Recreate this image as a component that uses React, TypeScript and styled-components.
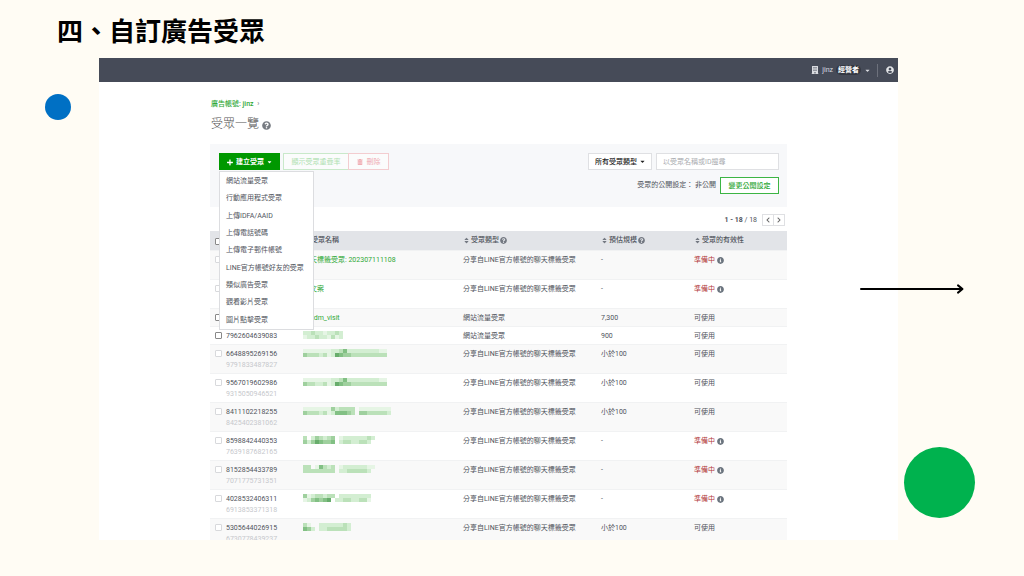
import React from "react";
import styled, { createGlobalStyle, css } from "styled-components";
import {
  FaPlus,
  FaQuestionCircle,
  FaInfoCircle,
  FaSort,
  FaTrashAlt,
  FaUserCircle,
  FaBuilding,
  FaChevronLeft,
  FaChevronRight,
  FaCaretDown,
} from "react-icons/fa";

const GlobalStyle = createGlobalStyle`
  *, *::before, *::after { box-sizing: border-box; }
  body {
    margin: 0;
    background: #fffcf4;
    font-family: Roboto, "Noto Sans CJK TC", sans-serif;
    font-size: 7px;
    line-height: 11px;
    color: #50545c;
  }
  button, input, select { font: inherit; margin: 0; }
`;

const Slide = styled.div`
  position: relative;
  display: flex;
  flex-direction: column;
  height: 100vh;
  padding-bottom: 36px;
  overflow: hidden;
`;

const SlideTitle = styled.h1`
  margin: 0;
  padding: 12px 0 10px 57px;
  font-size: 26px;
  line-height: 36px;
  font-weight: 700;
  font-family: "Noto Sans CJK TC", sans-serif;
  color: #000;
`;

const Card = styled.section`
  display: flex;
  flex-direction: column;
  flex: 1;
  min-height: 0;
  margin: 0 126px 0 99px;
  background: #fff;
  overflow: hidden;
`;

const TopBar = styled.nav`
  display: flex;
  flex: none;
  align-items: center;
  justify-content: flex-end;
  gap: 3px;
  height: 24px;
  padding-right: 4px;
  background: #464b58;
  color: #d9dbe0;
  svg { display: block; }
`;

const RolePill = styled.span`
  padding: 0 2px;
  border-radius: 5px;
  background: #343842;
  color: #fff;
  line-height: 10px;
  font-weight: 700;
`;

const BarDivider = styled.span`
  width: 1px;
  height: 13px;
  margin: 0 5px 0 3px;
  background: #6d717c;
`;

const AccountButton = styled.button`
  padding: 0;
  border: 0;
  background: none;
  color: #e3e5e8;
`;

const Main = styled.main`
  padding: 17px 111px 0;
`;

const Crumb = styled.a`
  display: block;
  padding-left: 1px;
  color: #2fa836;
  font-weight: 500;
  text-decoration: none;
  span { margin-left: 2px; color: #888; }
`;

const PageTitle = styled.h2`
  display: flex;
  align-items: center;
  gap: 3px;
  margin: 5px 0 11px;
  padding-left: 1px;
  font-size: 12px;
  line-height: 18px;
  font-weight: 300;
  color: #555;
  svg { margin-top: 2px; color: #777b82; }
`;

const Panel = styled.div`
  display: flex;
  flex-direction: column;
  gap: 7px;
  height: 63px;
  padding: 9px 8px 0 9px;
  background: #f7f8fa;
`;

const PanelRow = styled.div`
  display: flex;
  align-items: center;
  height: 17px;
`;

const Spacer = styled.span`
  flex: 1;
`;

const Tool = styled.button<{ $tone: "solid" | "faint" | "danger" | "outline" }>`
  display: flex;
  align-items: center;
  justify-content: center;
  gap: 4px;
  height: 17px;
  padding: 1px 7px 0;
  border: 1px solid;
  white-space: nowrap;
  ${({ $tone }) =>
    ({
      solid: css`
        width: 61px;
        background: #009800;
        border-color: #009800;
        color: #fff;
        font-weight: 700;
        gap: 3px;
      `,
      faint: css`
        width: 66px;
        background: #fbfcfc;
        border-color: #c9e9ca;
        color: #afe0b1;
      `,
      danger: css`
        width: 41px;
        margin-left: -1px;
        background: #fbfcfc;
        border-color: #f3cdd0;
        color: #efaab0;
      `,
      outline: css`
        width: 59px;
        background: #fff;
        border-color: #3cb544;
        color: #2fa836;
        font-weight: 500;
      `,
    })[$tone]}
`;

const MenuAnchor = styled.div`
  position: relative;
  margin-right: 3px;
`;

const Menu = styled.ul`
  position: absolute;
  z-index: 2;
  top: 18px;
  left: 0;
  display: grid;
  grid-auto-rows: 1fr;
  width: 95px;
  height: 159px;
  margin: 0;
  padding: 1px 0 0;
  list-style: none;
  background: #fff;
  border: 1px solid #dcdde0;
`;

const MenuItem = styled.li`
  display: flex;
  align-items: center;
  padding-left: 6px;
  white-space: nowrap;
  a { color: #50545c; text-decoration: none; }
`;

const TypeFilter = styled.label`
  display: grid;
  align-items: center;
  width: 64px;
  margin-right: 4px;
  select {
    grid-area: 1 / 1;
    height: 17px;
    padding: 1px 6px 0;
    border: 1px solid #dfe0e3;
    border-radius: 0;
    background: #fff;
    color: #222;
    font-weight: 500;
    appearance: none;
  }
  svg {
    grid-area: 1 / 1;
    justify-self: end;
    margin-right: 6px;
    color: #222;
    pointer-events: none;
  }
`;

const Search = styled.input`
  width: 123px;
  height: 17px;
  padding: 1px 6px 0;
  border: 1px solid #dfe0e3;
  background: #fff;
  &::placeholder { color: #a9abaf; opacity: 1; }
`;

const Visibility = styled.span`
  margin-right: 4px;
`;

const Pager = styled.div`
  display: flex;
  align-items: center;
  justify-content: flex-end;
  height: 24px;
  padding: 2px 2px 0 0;
`;

const PagerText = styled.span`
  margin-right: 5px;
  white-space: pre;
`;

const PagerButton = styled.button`
  display: grid;
  place-items: center;
  width: 12px;
  height: 12px;
  padding: 0;
  border: 1px solid #dfe0e3;
  background: #fff;
  color: #666;
  & + & { margin-left: -1px; }
`;

const Table = styled.table`
  width: 100%;
  table-layout: fixed;
  border-collapse: separate;
  border-spacing: 0;
  col.check { width: 16px; }
  col.id { width: 77px; }
  col.name { width: 160px; }
  col.type { width: 138px; }
  col.size { width: 93px; }
  td, th { padding: 0; text-align: left; vertical-align: top; white-space: nowrap; }
  th {
    height: 19px;
    background: #e2e4e8;
    vertical-align: middle;
    font-weight: 500;
  }
`;

const HeadLabel = styled.span`
  display: flex;
  align-items: center;
  gap: 1px;
  svg { color: #747982; }
`;

const Row = styled.tr<{ $short?: boolean; $shade?: boolean }>`
  height: ${({ $short }) => ($short ? 18 : 29)}px;
  background: ${({ $shade }) => ($shade ? "#f9f9f9" : "#fff")};
  && td {
    padding-top: 4px;
    border-top: 1px solid #f1f2f3;
  }
`;

const Tick = styled.input`
  display: block;
  appearance: none;
  width: 7px;
  height: 7px;
  margin: 1px 0 0 5px !important;
  border: 1px solid #888;
  border-radius: 1px;
  background: #fff;
  &:disabled { border-color: #d8d9dc; }
`;

const SubId = styled.div`
  color: #c6c8cc;
`;

const NameLink = styled.a`
  color: #2fa836;
  text-decoration: none;
`;

const Pending = styled.span`
  display: flex;
  align-items: center;
  gap: 2px;
  color: #b23a3a;
  svg { color: #6c757f; }
`;

const MosaicArt = styled.svg`
  display: block;
  margin-top: -1px;
`;

const BlueDot = styled.div`
  position: absolute;
  top: 94px;
  left: 45px;
  width: 26px;
  height: 26px;
  border-radius: 50%;
  background: #0070c4;
`;

const GreenDot = styled.div`
  position: absolute;
  top: 447px;
  right: 49px;
  width: 71px;
  height: 71px;
  border-radius: 50%;
  background: #00b24e;
`;

const Arrow = styled.svg`
  position: absolute;
  top: 283px;
  right: 60px;
`;

const shades = ["none", "#e6f5e5", "#d3eed2", "#bbe1b9", "#9fd09e", "#82c084", "#68ad6c"];

// Redacted names are drawn as two lines of 4px cells, each digit a shade.
function Mosaic({ cells }: { cells: string[] }) {
  return (
    <MosaicArt width={96} height={10} role="img" aria-label="已遮蔽的受眾名稱">
      {cells.map((line, y) =>
        line
          .split("")
          .map((c, x) =>
            c === "0" ? null : (
              <rect key={`${x}-${y}`} x={x * 4} y={y * 4 + 1} width={4} height={4} fill={shades[Number(c)]} />
            ),
          ),
      )}
    </MosaicArt>
  );
}

const menuItems = [
  "網站流量受眾",
  "行動應用程式受眾",
  "上傳IDFA/AAID",
  "上傳電話號碼",
  "上傳電子郵件帳號",
  "LINE官方帳號好友的受眾",
  "類似廣告受眾",
  "觀看影片受眾",
  "圖片點擊受眾",
];

type Audience = {
  id?: string;
  sub?: string;
  name?: string;
  mosaic?: string[];
  type: string;
  size: string;
  pending?: boolean;
  short?: boolean;
};

const CHAT = "分享自LINE官方帳號的聊天標籤受眾";
const SITE = "網站流量受眾";

const audiences: Audience[] = [
  { name: "聊天標籤受眾: 202307111108", type: CHAT, size: "-", pending: true },
  { name: "測文案", type: CHAT, size: "-", pending: true },
  { name: "a_edm_visit", type: SITE, size: "7,300", short: true },
  { id: "7962604639083", mosaic: ["2232212232", "1223221312"], type: SITE, size: "900", short: true },
  { id: "6648895269156", sub: "9791833487827", mosaic: ["111111122352222222211", "433323126544333333333"], type: CHAT, size: "小於100" },
  { id: "9567019602986", sub: "9315050946521", mosaic: ["111111122352222222211", "433223126544333333333"], type: CHAT, size: "小於100" },
  { id: "8411102218255", sub: "8425402381062", mosaic: ["1111111423333011111111", "4333231255543044333332"], type: CHAT, size: "小於100" },
  { id: "8598842440353", sub: "7639187682165", mosaic: ["302432340122222232", "424654450233223320"], type: CHAT, size: "-", pending: true },
  { id: "8152854433789", sub: "7071775731351", mosaic: ["330153230122222211", "333333330223333320"], type: CHAT, size: "-", pending: true },
  { id: "4028532406311", sub: "6913853371318", mosaic: ["412332330222222220", "124545602233223310"], type: CHAT, size: "-", pending: true },
  { id: "5305644026915", sub: "6730778439237", mosaic: ["310022222232", "542022333332"], type: CHAT, size: "小於100" },
];

export default function App() {
  return (
    <Slide>
      <GlobalStyle />
      <SlideTitle>四、自訂廣告受眾</SlideTitle>
      <Card>
        <TopBar>
          <FaBuilding size={8} />
          <span>jinz</span>
          <RolePill>經營者</RolePill>
          <FaCaretDown size={7} />
          <BarDivider />
          <AccountButton aria-label="帳號">
            <FaUserCircle size={8} />
          </AccountButton>
        </TopBar>
        <Main>
          <Crumb href="#account">
            廣告帳號: jinz <span>›</span>
          </Crumb>
          <PageTitle>
            受眾一覽
            <FaQuestionCircle size={9} />
          </PageTitle>
          <Panel>
            <PanelRow>
              <MenuAnchor>
                <Tool $tone="solid" aria-expanded="true">
                  <FaPlus size={7} />
                  建立受眾
                  <FaCaretDown size={6} />
                </Tool>
                <Menu>
                  {menuItems.map((item) => (
                    <MenuItem key={item}>
                      <a href="#create">{item}</a>
                    </MenuItem>
                  ))}
                </Menu>
              </MenuAnchor>
              <Tool $tone="faint" disabled>
                顯示受眾重疊率
              </Tool>
              <Tool $tone="danger" disabled>
                <FaTrashAlt size={6} />
                刪除
              </Tool>
              <Spacer />
              <TypeFilter>
                <select aria-label="受眾類型">
                  <option>所有受眾類型</option>
                </select>
                <FaCaretDown size={7} />
              </TypeFilter>
              <Search aria-label="搜尋" placeholder="以受眾名稱或ID搜尋" />
            </PanelRow>
            <PanelRow>
              <Spacer />
              <Visibility>受眾的公開設定： 非公開</Visibility>
              <Tool $tone="outline">變更公開設定</Tool>
            </PanelRow>
          </Panel>
          <Pager>
            <PagerText>
              <b>1 - 18</b> / 18
            </PagerText>
            <PagerButton aria-label="上一頁">
              <FaChevronLeft size={6} />
            </PagerButton>
            <PagerButton aria-label="下一頁">
              <FaChevronRight size={6} />
            </PagerButton>
          </Pager>
          <Table>
            <colgroup>
              <col className="check" />
              <col className="id" />
              <col className="name" />
              <col className="type" />
              <col className="size" />
              <col />
            </colgroup>
            <thead>
              <tr>
                <th>
                  <Tick type="checkbox" aria-label="全選" />
                </th>
                <th>ID</th>
                <th>
                  <HeadLabel>
                    <FaSort size={7} />
                    受眾名稱
                  </HeadLabel>
                </th>
                <th>
                  <HeadLabel>
                    <FaSort size={7} />
                    受眾類型
                    <FaQuestionCircle size={7} />
                  </HeadLabel>
                </th>
                <th>
                  <HeadLabel>
                    <FaSort size={7} />
                    預估規模
                    <FaQuestionCircle size={7} />
                  </HeadLabel>
                </th>
                <th>
                  <HeadLabel>
                    <FaSort size={7} />
                    受眾的有效性
                  </HeadLabel>
                </th>
              </tr>
            </thead>
            <tbody>
              {audiences.map((a, i) => (
                <Row key={i} $short={a.short} $shade={i % 2 === 0}>
                  <td>
                    <Tick type="checkbox" aria-label="選取受眾" disabled={!a.short} />
                  </td>
                  <td>
                    {a.id}
                    {a.sub && <SubId>{a.sub}</SubId>}
                  </td>
                  <td>{a.mosaic ? <Mosaic cells={a.mosaic} /> : <NameLink href="#audience">{a.name}</NameLink>}</td>
                  <td>{a.type}</td>
                  <td>{a.size}</td>
                  <td>
                    {a.pending ? (
                      <Pending>
                        準備中
                        <FaInfoCircle size={7} />
                      </Pending>
                    ) : (
                      "可使用"
                    )}
                  </td>
                </Row>
              ))}
            </tbody>
          </Table>
        </Main>
      </Card>
      <BlueDot />
      <GreenDot />
      <Arrow width={104} height={12} viewBox="0 0 104 12" fill="none" stroke="#000" strokeWidth={2} strokeLinecap="round" strokeLinejoin="round">
        <path d="M1 6H102M98 2.4L102.5 6L98 9.6" />
      </Arrow>
    </Slide>
  );
}
